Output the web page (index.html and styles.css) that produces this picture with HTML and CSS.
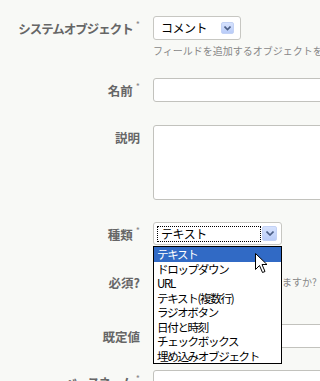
FILE: index.html
```html
<!DOCTYPE html>
<html lang="ja">

<head>
    <meta charset="UTF-8">
    <meta name="viewport" content="width=device-width, initial-scale=1.0">
    <title>カスタムフィールドの追加</title>
    <link rel="stylesheet" href="styles.css">
</head>

<body>
    <div id="form">
        <div class="row row-object">
            <div class="label wide">システムオブジェクト<span class="req">*</span></div>
            <div class="field">
                <div class="select select-object">
                    <span class="value">コメント</span>
                    <span class="arrow">
                        <svg width="7" height="5" viewBox="0 0 7 5"><path d="M0.5 0.5 L3.5 3.5 L6.5 0.5" fill="none" stroke="#4c5f86" stroke-width="1.6"/></svg>
                    </span>
                </div>
                <div class="help">フィールドを追加するオブジェクトを選択してください</div>
            </div>
        </div>

        <div class="row row-name">
            <div class="label">名前<span class="req">*</span></div>
            <div class="field">
                <div class="input"></div>
            </div>
        </div>

        <div class="row row-desc">
            <div class="label">説明</div>
            <div class="field">
                <div class="input textarea"></div>
            </div>
        </div>

        <div class="row row-type">
            <div class="label">種類<span class="req">*</span></div>
            <div class="field">
                <div class="select select-type">
                    <span class="value focus">テキスト</span>
                    <span class="arrow">
                        <svg width="8" height="5" viewBox="0 0 8 5"><path d="M0.5 0.5 L4 4 L7.5 0.5" fill="none" stroke="#4c5f86" stroke-width="1.6"/></svg>
                    </span>
                </div>
                <ul class="list">
                    <li class="selected">テキスト</li>
                    <li>ドロップダウン</li>
                    <li>URL</li>
                    <li>テキスト(複数行)</li>
                    <li>ラジオボタン</li>
                    <li>日付と時刻</li>
                    <li>チェックボックス</li>
                    <li>埋め込みオブジェクト</li>
                    <svg class="cursor" width="13" height="21" viewBox="0 0 13 21">
                        <path d="M0.5 0.5 L0.5 16.5 L4.5 12.5 L7.5 19.5 L10 18.5 L7 11.5 L12 11.5 Z" fill="#fff" stroke="#000" stroke-width="1"/>
                    </svg>
                </ul>
            </div>
        </div>

        <div class="row row-required">
            <div class="label">必須?</div>
            <div class="field check">
                <span class="box"></span>
                <span class="help">この項目を必須項目にしますか?</span>
            </div>
        </div>

        <div class="row row-default">
            <div class="label">既定値</div>
            <div class="field">
                <div class="input"></div>
            </div>
        </div>

        <div class="row row-base">
            <div class="label wide">ベースネーム<span class="req">*</span></div>
            <div class="field">
                <div class="input"></div>
            </div>
        </div>
    </div>
</body>

</html>
```

FILE: styles.css
```css
body {
    font-family: "Noto Sans CJK JP", "Liberation Sans", sans-serif;
    background-color: #f8f9f6;
    margin: 0;
    padding: 0;
    overflow: hidden;
}

#form {
    padding-top: 16px;
}

.row {
    display: flex;
    flex-direction: row;
    gap: 13px;
    margin-bottom: 22px;
}

.row-object {
    margin-bottom: 20px;
}

.row-type {
    margin-bottom: 23px;
}

.row-required {
    margin-bottom: 29px;
}

.row-default {
    margin-bottom: 21px;
}

.label {
    width: 140px;
    flex-shrink: 0;
    text-align: right;
    font-size: 12.5px;
    font-weight: bold;
    color: #666;
    line-height: 24px;
    padding-top: 1px;
    white-space: nowrap;
}

.label.wide {
    letter-spacing: -1px;
}

.req {
    font-size: 9px;
    font-weight: normal;
    color: #888;
    vertical-align: top;
    line-height: 16px;
    margin-left: 3px;
    letter-spacing: 0;
}

.field {
    position: relative;
    flex-shrink: 0;
}

.help {
    font-size: 10px;
    color: #888;
    line-height: 14px;
    margin-top: 4px;
    white-space: nowrap;
}

.input {
    width: 300px;
    height: 24px;
    box-sizing: border-box;
    background-color: #fff;
    border: 1px solid #c2c2bd;
    border-radius: 3px;
}

.textarea {
    height: 75px;
}

.select {
    display: flex;
    align-items: center;
    box-sizing: border-box;
    background-color: #fff;
    border: 1px solid #c7c7c2;
    border-radius: 3px;
    font-size: 12px;
    color: #000;
}

.select-object {
    width: 88px;
    height: 24px;
    padding: 0 6px 0 7px;
    justify-content: space-between;
}

.select-object .arrow {
    width: 13px;
    height: 12px;
}

.select-type {
    width: 129px;
    height: 23px;
    padding: 0 4px 0 3px;
    gap: 1px;
}

.select-type .arrow {
    width: 15px;
    height: 15px;
}

.value {
    line-height: 16px;
    letter-spacing: -0.5px;
}

.value.focus {
    width: 104px;
    height: 16px;
    box-sizing: border-box;
    border: 1px dotted #000;
    padding-left: 3px;
    line-height: 14px;
}

.arrow {
    display: flex;
    align-items: center;
    justify-content: center;
    background: linear-gradient(#d6e2fd, #b9ccf8);
    border: 1px solid #c3d2f5;
    box-sizing: border-box;
    border-radius: 2px;
}

.list {
    position: absolute;
    top: 24px;
    left: 0;
    width: 129px;
    box-sizing: border-box;
    margin: 0;
    padding: 0;
    list-style: none;
    background-color: #fff;
    border: 1px solid #000;
    font-size: 11.5px;
    letter-spacing: -1.3px;
    color: #000;
    z-index: 2;
}

.list li {
    height: 14.5px;
    line-height: 14.5px;
    padding-left: 3px;
    white-space: nowrap;
}

.list li.selected {
    background-color: #316ac5;
    color: #fff;
}

.cursor {
    position: absolute;
    top: 6px;
    left: 101px;
}

.check {
    display: flex;
    align-items: center;
    gap: 6px;
    height: 24px;
}

.check .box {
    width: 13px;
    height: 13px;
    border: 1px solid #888;
    background-color: #fff;
    box-sizing: border-box;
}

.check .help {
    margin-top: 0;
}
```
